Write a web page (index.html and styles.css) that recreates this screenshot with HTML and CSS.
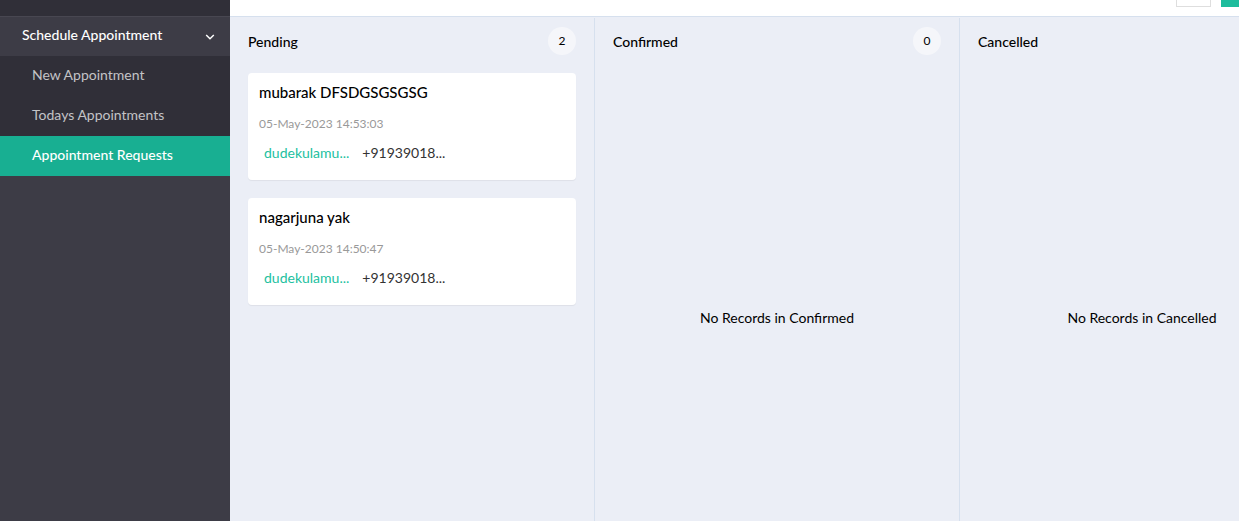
FILE: index.html
```
<!DOCTYPE html>
<html lang="en">
<head>
  <meta charset="utf-8">
  <title>Appointment Requests</title>
  <link rel="stylesheet" href="styles.css">
</head>
<body>
  <div class="app">
    <nav class="sidebar" aria-label="Main">
      <div class="sidebar-top"></div>
      <button class="nav-group" type="button" aria-expanded="true">
        <span>Schedule Appointment</span>
        <svg class="chevron" viewBox="0 0 10 6" aria-hidden="true"><path d="M1.2 1 5 4.7 8.8 1"/></svg>
      </button>
      <ul class="nav-list">
        <li><a class="nav-link" href="#new">New Appointment</a></li>
        <li><a class="nav-link" href="#today">Todays Appointments</a></li>
        <li><a class="nav-link nav-link-active" href="#requests" aria-current="page">Appointment Requests</a></li>
      </ul>
    </nav>
    <main class="main">
      <header class="toolbar">
        <button class="tool tool-outline" type="button" aria-label="View"></button>
        <button class="tool tool-primary" type="button" aria-label="Add"></button>
      </header>
      <div class="board">
        <section class="column">
          <header class="column-head">
            <h2 class="column-title">Pending</h2>
            <span class="count">2</span>
          </header>
          <div class="cards">
            <article class="card">
              <h3 class="card-name">mubarak DFSDGSGSGSG</h3>
              <time class="card-time">05-May-2023 14:53:03</time>
              <div class="card-contact">
                <a class="card-mail" href="#mail">dudekulamu...</a>
                <span>+91939018...</span>
              </div>
            </article>
            <article class="card">
              <h3 class="card-name">nagarjuna yak</h3>
              <time class="card-time">05-May-2023 14:50:47</time>
              <div class="card-contact">
                <a class="card-mail" href="#mail">dudekulamu...</a>
                <span>+91939018...</span>
              </div>
            </article>
          </div>
        </section>
        <section class="column">
          <header class="column-head">
            <h2 class="column-title">Confirmed</h2>
            <span class="count">0</span>
          </header>
          <p class="empty">No Records in Confirmed</p>
        </section>
        <section class="column">
          <header class="column-head">
            <h2 class="column-title">Cancelled</h2>
          </header>
          <p class="empty">No Records in Cancelled</p>
        </section>
      </div>
    </main>
  </div>
</body>
</html>
```
FILE: styles.css
```
* {
  box-sizing: border-box;
}

body {
  margin: 0;
  background: #ebeef6;
  color: #000;
  font: 14px/20px Lato, "Liberation Sans", sans-serif;
}

button {
  margin: 0;
  border: 0;
  font: inherit;
  cursor: pointer;
}

a {
  text-decoration: none;
}

.app {
  display: flex;
  height: 100vh;
  overflow: hidden;
}

.sidebar {
  flex: 0 0 230px;
  background: #3d3c46;
}

.sidebar-top {
  height: 16px;
  background: #302f38;
}

.nav-group {
  display: flex;
  align-items: center;
  justify-content: space-between;
  width: 100%;
  height: 40px;
  padding: 0 15px 3px 22px;
  border-top: 1px solid #484751;
  background: #3d3c46;
  color: #fff;
  font-weight: 500;
}

.chevron {
  width: 10px;
  height: 6px;
  margin-top: 4px;
  fill: none;
  stroke: #fff;
  stroke-width: 1.5;
}

.nav-list {
  margin: 0;
  padding: 0;
  list-style: none;
  background: #302f38;
}

.nav-link {
  display: block;
  padding: 9px 32px 11px;
  color: #c3c3c6;
}

.nav-link-active {
  background: #18af92;
  color: #fff;
  font-weight: 500;
}

.main {
  display: flex;
  flex: 1;
  flex-direction: column;
  min-width: 0;
}

.toolbar {
  display: flex;
  justify-content: flex-end;
  gap: 10px;
  height: 17px;
  border-bottom: 1px solid #d6e0ee;
  background: #fff;
}

.tool {
  height: 7px;
  padding: 0;
}

.tool-outline {
  width: 35px;
  border: 1px solid #dedede;
  border-top: 0;
  background: #fff;
}

.tool-primary {
  width: 18px;
  background: #1dbc9c;
}

.board {
  display: flex;
  flex: 1;
  padding-top: 1px;
  overflow: hidden;
}

.column {
  flex: 0 0 365px;
  padding: 9px 18px 0;
  border-right: 1px solid #d6e0ee;
}

.column-head {
  display: flex;
  justify-content: space-between;
  height: 46px;
}

.column-title {
  margin: 0;
  padding-top: 5px;
  font-size: 14px;
  font-weight: 500;
}

.count {
  width: 28px;
  height: 28px;
  border-radius: 50%;
  background: #f5f6fa;
  font-size: 12px;
  line-height: 28px;
  text-align: center;
}

.cards {
  display: grid;
  gap: 18px;
}

.card {
  padding: 9px 11px 17px;
  border-radius: 4px;
  background: #fff;
  box-shadow: 0 1px 1px rgba(0, 0, 0, 0.06);
}

.card-name {
  margin: 0 0 12px;
  font-size: 15px;
  font-weight: 500;
}

.card-time {
  display: block;
  margin-bottom: 9px;
  color: #999;
  font-size: 12px;
}

.card-contact {
  display: flex;
  gap: 13px;
  padding: 0 5px;
  color: #333;
}

.card-mail {
  color: #22bfa0;
}

.empty {
  margin: 0;
  padding-top: 235px;
  text-align: center;
}
```
